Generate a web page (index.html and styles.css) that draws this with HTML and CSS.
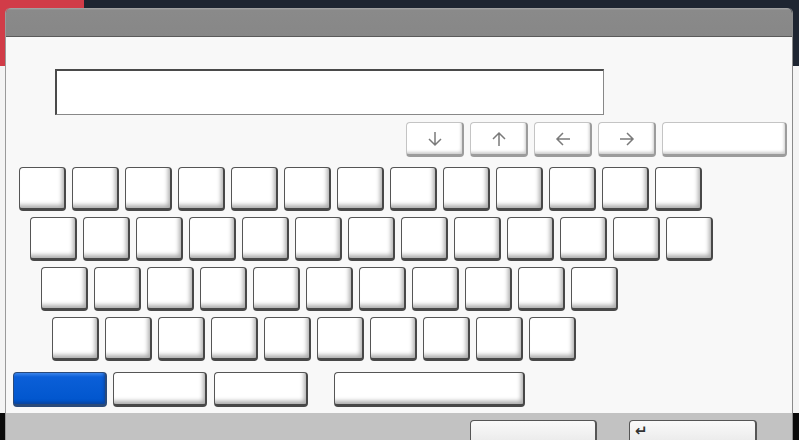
FILE: index.html
```html
<!DOCTYPE html>
<html>
<head>
<meta charset="utf-8">
<link rel="stylesheet" href="styles.css">
</head>
<body>
<div class="dialog">
  <div class="titlebar"></div>
  <div class="content">
    <div class="input"></div>
    <div class="arrows">
      <div class="key akey"><svg width="16" height="16" viewBox="0 0 16 16"><path d="M8 1v13M2 8l6 6 6-6" fill="none" stroke="#7a7a7a" stroke-width="1.5"/></svg></div>
      <div class="key akey"><svg width="16" height="16" viewBox="0 0 16 16"><path d="M8 15V2M2 8l6-6 6 6" fill="none" stroke="#7a7a7a" stroke-width="1.5"/></svg></div>
      <div class="key akey"><svg width="16" height="16" viewBox="0 0 16 16"><path d="M15 8H2M8 2L2 8l6 6" fill="none" stroke="#7a7a7a" stroke-width="1.5"/></svg></div>
      <div class="key akey"><svg width="16" height="16" viewBox="0 0 16 16"><path d="M1 8h13M8 2l6 6-6 6" fill="none" stroke="#7a7a7a" stroke-width="1.5"/></svg></div>
      <div class="key wide"></div>
    </div>
    <div class="row r1">
      <div class="key"></div><div class="key"></div><div class="key"></div><div class="key"></div><div class="key"></div><div class="key"></div><div class="key"></div><div class="key"></div><div class="key"></div><div class="key"></div><div class="key"></div><div class="key"></div><div class="key"></div>
    </div>
    <div class="row r2">
      <div class="key"></div><div class="key"></div><div class="key"></div><div class="key"></div><div class="key"></div><div class="key"></div><div class="key"></div><div class="key"></div><div class="key"></div><div class="key"></div><div class="key"></div><div class="key"></div><div class="key"></div>
    </div>
    <div class="row r3">
      <div class="key"></div><div class="key"></div><div class="key"></div><div class="key"></div><div class="key"></div><div class="key"></div><div class="key"></div><div class="key"></div><div class="key"></div><div class="key"></div><div class="key"></div>
    </div>
    <div class="row r4">
      <div class="key"></div><div class="key"></div><div class="key"></div><div class="key"></div><div class="key"></div><div class="key"></div><div class="key"></div><div class="key"></div><div class="key"></div><div class="key"></div>
    </div>
    <div class="row r5">
      <div class="key mod blue"></div>
      <div class="key mod"></div>
      <div class="key mod m3"></div>
      <div class="key space"></div>
    </div>
  </div>
  <div class="footer">
    <div class="fbtn"></div>
    <div class="fbtn enter">↵</div>
  </div>
</div>
</body>
</html>
```

FILE: styles.css
```css
html, body {
  margin: 0;
  padding: 0;
}
body {
  width: 799px;
  height: 440px;
  overflow: hidden;
  background:
    linear-gradient(#d13c48, #d13c48) 0 0 / 84px 66px no-repeat,
    linear-gradient(#1e2531, #1e2531) 0 0 / 799px 66px no-repeat,
    linear-gradient(#f4f4f4, #f4f4f4) 0 66px / 799px 347px no-repeat,
    #0a0a0a;
  font-family: "DejaVu Sans", sans-serif;
}
.dialog {
  margin: 8px 0 0 5px;
  width: 788px;
  height: 432px;
  display: flex;
  flex-direction: column;
  box-sizing: border-box;
  border-left: 1px solid #9a9a9a;
  border-right: 1px solid #8a8a8a;
  border-radius: 5px 5px 0 0;
  overflow: hidden;
}
.titlebar {
  height: 28px;
  flex: none;
  background: linear-gradient(#a8a8a8 0, #8a8a8a 2px, #878787 100%);
  border-bottom: 1px solid #5a5a5a;
  border-radius: 5px 5px 0 0;
}
.content {
  flex: 1;
  background: #f8f8f8;
  padding-top: 32px;
  box-sizing: border-box;
  display: flex;
  flex-direction: column;
}
.input {
  margin-left: 49px;
  width: 549px;
  height: 46px;
  box-sizing: border-box;
  background: #fff;
  border: 1px solid #888;
  border-top: 2px solid #4a4a4a;
  border-left: 2px solid #4a4a4a;
}
.arrows {
  margin-top: 7px;
  display: flex;
  justify-content: flex-end;
  gap: 6px;
  padding-right: 5px;
  height: 35px;
}
.key {
  box-sizing: border-box;
  width: 47px;
  height: 44px;
  background: #fff;
  border: 1px solid #555;
  border-right: 2px solid #484848;
  border-bottom: 3px solid #484848;
  border-radius: 4px;
  box-shadow: inset -3px -4px 4px -1px #adadad;
}
.akey {
  width: 58px;
  height: 35px;
  display: flex;
  align-items: center;
  justify-content: center;
  border-color: #c4c4c4;
  border-right-color: #9c9c9c;
  border-bottom-color: #9c9c9c;
  box-shadow: inset -2px -3px 3px -1px #cfcfcf;
}
.wide {
  width: 125px;
  height: 35px;
  border-color: #c4c4c4;
  border-right-color: #9c9c9c;
  border-bottom-color: #9c9c9c;
  box-shadow: inset -2px -3px 3px -1px #cfcfcf;
}
.row {
  display: flex;
  gap: 6px;
  margin-top: 6px;
}
.r1 { margin-top: 10px; padding-left: 13px; }
.r2 { padding-left: 24px; }
.r3 { padding-left: 35px; }
.r4 { padding-left: 46px; }
.r5 { margin-top: 11px; padding-left: 7px; }
.mod {
  width: 94px;
  height: 35px;
}
.m3 { margin-left: 1px; }
.space {
  width: 191px;
  height: 35px;
  margin-left: 20px;
}
.blue {
  background: linear-gradient(#3b84ea 0, #0b5fd8 4px, #0055cc 100%);
  border-color: #2a4a7a;
  box-shadow: inset -2px -3px 3px -1px #0a45a0;
}
.footer {
  height: 27px;
  flex: none;
  background: #c2c2c2;
  display: flex;
  align-items: flex-start;
  padding-left: 464px;
  gap: 32px;
  padding-top: 7px;
  box-sizing: border-box;
}
.fbtn {
  box-sizing: border-box;
  width: 127px;
  height: 20px;
  flex: none;
  background: linear-gradient(#fafafa, #ececec);
  border: 1px solid #555;
  border-right-width: 2px;
  border-bottom: none;
  border-radius: 4px 4px 0 0;
}
.enter {
  width: 128px;
  font-size: 15px;
  line-height: 15px;
  color: #333;
  padding: 3px 0 0 5px;
  font-weight: bold;
}
```
